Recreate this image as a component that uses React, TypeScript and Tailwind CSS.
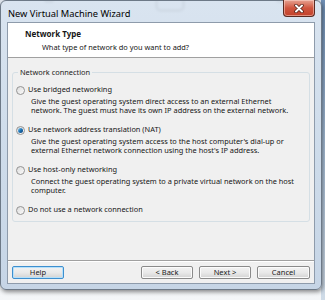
import React from "react";

const font = { fontFamily: '"Noto Sans", "Open Sans", sans-serif' };

const Radio = ({ checked }: { checked?: boolean }) => (
    <span className="relative flex h-[9px] w-[9px] shrink-0 items-center justify-center rounded-full border border-[#939393] bg-gradient-to-br from-[#dcdcdc] to-[#fbfbfb]">
        {checked && <span className="h-[5px] w-[5px] rounded-full bg-gradient-to-br from-[#8ad0f5] via-[#1b73b4] to-[#0d3e75]" />}
    </span>
);

const Option = ({ label, desc, checked }: { label: string, desc?: string[], checked?: boolean }) => (
    <div className="flex flex-col">
        <div className="flex h-[10px] items-center gap-[3px] pl-[3px]">
            <Radio checked={checked} />
            <span>{label}</span>
        </div>
        {desc && (
            <div className="mt-[2px] pl-[18px] leading-[9px]">
                {desc.map((d) => <div key={d}>{d}</div>)}
            </div>
        )}
    </div>
);

const Button = ({ label, focus, className }: { label: string, focus?: boolean, className?: string }) => (
    <button className={`h-[13px] w-[52px] rounded-[2px] border text-[7.5px] leading-none text-[#1b1b1b] bg-gradient-to-b from-[#f2f2f2] via-[#e9e9e9] to-[#d3d3d3] ${focus ? 'border-[#3d8fcf] shadow-[inset_0_0_0_1px_#b6e0fa]' : 'border-[#8a8a8a] shadow-[inset_0_0_0_1px_#fbfbfb]'} ${className ?? ''}`}>
        {label}
    </button>
);

export default function App() {
    return (
        <div className="relative h-[300px] w-[325px] overflow-hidden bg-gradient-to-b from-[#dfe6ee] to-[#f4f6f8]" style={font}>
            {/* stuff behind the glass */}
            <div className="absolute left-[44px] top-[-3px] h-[6px] w-[10px] rounded-full bg-[#222] blur-[1px]" />
            <div className="absolute left-[155px] top-[-4px] h-[16px] w-[30px] rounded-[6px] border-[3px] border-[#333] blur-[1px]" />
            <div className="absolute left-[276px] top-[-4px] h-[7px] w-[16px] rounded-full bg-[#333] blur-[1px]" />
            <div className="absolute right-0 top-0 h-full w-[4px] bg-gradient-to-b from-[#6f8fb5] via-[#a6bdd6] to-[#cfdbe7]" />

            <div className="relative flex h-[290px] w-[322px] flex-col rounded-[6px] border border-[#6d7987] bg-gradient-to-b from-[#d9e4f0]/95 via-[#cddbea]/95 to-[#c6d5e6] shadow-[1px_2px_4px_rgba(0,0,0,0.45)]">
                <div className="relative h-[21px]">
                    <div className="pl-[7px] pt-[7px] text-[9.3px] leading-[11px] text-black">New Virtual Machine Wizard</div>
                    <div className="absolute right-[6px] top-[-1px] flex h-[17px] w-[32px] items-center justify-center rounded-b-[4px] border border-t-0 border-[#5a2a22] bg-gradient-to-b from-[#e6a292] via-[#cf553f] to-[#c2412a] shadow-[inset_0_0_0_1px_rgba(255,220,210,0.5)]">
                        <svg width="10" height="9" viewBox="0 0 10 9">
                            <path d="M2 1.5 L8 7.5 M8 1.5 L2 7.5" stroke="#4a1a12" strokeWidth="3.4" strokeLinecap="round" />
                            <path d="M2 1.5 L8 7.5 M8 1.5 L2 7.5" stroke="#fff" strokeWidth="2" strokeLinecap="round" />
                        </svg>
                    </div>
                </div>

                <div className="mx-[6px] flex h-[262px] flex-col border border-[#8e9bab] bg-[#f0f0f0] text-[7.4px] text-[#161616]">
                    <div className="h-[35px] shrink-0 border-b border-[#a0a0a0] bg-white pl-[17px] pt-[6px]">
                        <div className="text-[8px] font-bold leading-[10px]">Network Type</div>
                        <div className="mt-[3px] pl-[17px] leading-[10px]">What type of network do you want to add?</div>
                    </div>

                    <fieldset className="mx-[4px] mt-[9px] h-[155px] shrink-0 rounded-[3px] border border-[#d5dfe5]">
                        <legend className="ml-[5px] px-[2px] leading-[10px] text-[#222]">Network connection</legend>
                        <div className="mt-[8px] flex flex-col gap-[10px]">
                            <Option label="Use bridged networking" desc={["Give the guest operating system direct access to an external Ethernet", "network. The guest must have its own IP address on the external network."]} />
                            <Option checked label="Use network address translation (NAT)" desc={["Give the guest operating system access to the host computer's dial-up or", "external Ethernet network connection using the host's IP address."]} />
                            <Option label="Use host-only networking" desc={["Connect the guest operating system to a private virtual network on the host", "computer."]} />
                            <Option label="Do not use a network connection" />
                        </div>
                    </fieldset>

                    <div className="mt-auto border-t border-[#a0a0a0] shadow-[inset_0_1px_0_#fff]">
                        <div className="flex h-[22px] items-start gap-[6px] px-[4px] pt-[5px]">
                            <Button label="Help" focus />
                            <div className="flex-1" />
                            <Button label="< Back" />
                            <Button label="Next >" />
                            <Button label="Cancel" className="w-[53px]" />
                        </div>
                    </div>
                </div>
            </div>
        </div>
    );
}
